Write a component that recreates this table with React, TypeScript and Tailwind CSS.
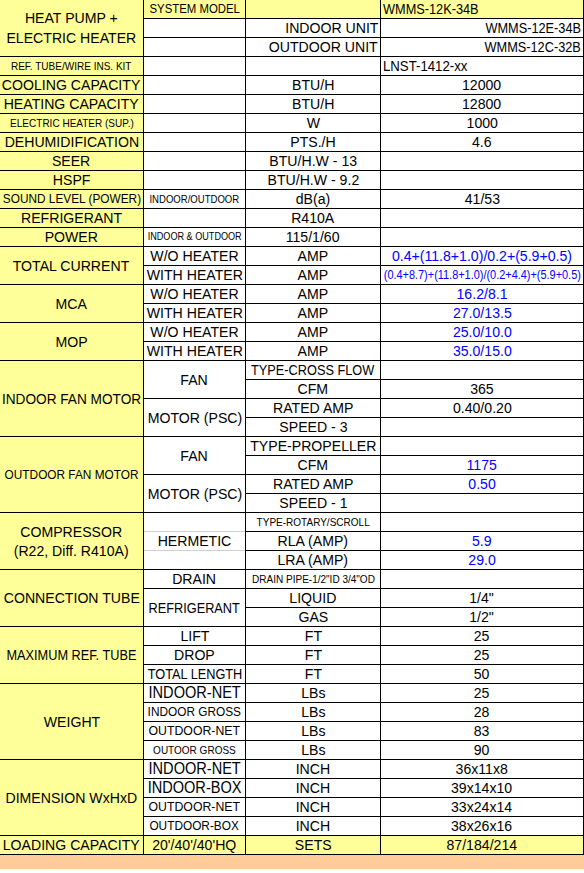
import React from 'react';

type CP = {
  bg?: 'y' | 'w';
  span?: 2 | 3 | 4;
  a?: 'c' | 'l' | 'r';
  sz?: string;
  blue?: boolean;
  children?: React.ReactNode;
};

function C({ bg = 'w', span, a = 'c', sz = 'text-[15.5px]', blue, children }: CP) {
  const spanCls = span === 2 ? 'row-span-2' : span === 3 ? 'row-span-3' : span === 4 ? 'row-span-4' : '';
  const bgCls = bg === 'y' ? 'bg-[#ffff99]' : 'bg-white';
  const alignCls = a === 'c' ? 'justify-center' : a === 'l' ? 'justify-start pl-[2px]' : 'justify-end pr-[2px]';
  const origin = a === 'c' ? 'origin-center' : a === 'l' ? 'origin-left' : 'origin-right';
  return (
    <div className={`flex items-center ${spanCls} ${bgCls} ${alignCls}`}>
      {children !== undefined && (
        <span
          className={`inline-block whitespace-nowrap scale-x-[0.91] leading-[18px] ${origin} ${sz} ${
            blue ? 'text-[#0000ff]' : 'text-black'
          }`}
        >
          {children}
        </span>
      )}
    </div>
  );
}

export default function App() {
  const Y = 'y' as const;
  return (
    <div className="w-[584px] bg-white font-['Liberation_Sans',Arial,sans-serif]">
      <div className="grid w-[584px] grid-cols-[143px_101px_134px_202px] auto-rows-[18px] gap-px border-r border-b border-black bg-black">
        {/* Row 1-3 */}
        <div className="row-span-3 flex items-center justify-center bg-[#ffff99]">
          <span className="inline-block scale-x-[0.91] text-center text-[15.5px] leading-[20px] text-black whitespace-nowrap">
            HEAT PUMP +<br />ELECTRIC HEATER
          </span>
        </div>
        <C bg={Y} sz="text-[12.5px]">SYSTEM MODEL</C>
        <C bg={Y} />
        <C bg={Y} a="l" sz="text-[14px]">WMMS-12K-34B</C>

        <C />
        <C a="r">INDOOR UNIT</C>
        <C a="r" sz="text-[14px]">WMMS-12E-34B</C>

        <C />
        <C a="r">OUTDOOR UNIT</C>
        <C a="r" sz="text-[14px]">WMMS-12C-32B</C>

        {/* Row 4 */}
        <C bg={Y} sz="text-[11px]">REF. TUBE/WIRE INS. KIT</C>
        <C />
        <C />
        <C a="l" sz="text-[14.5px]">LNST-1412-xx</C>

        <C bg={Y}>COOLING CAPACITY</C>
        <C />
        <C>BTU/H</C>
        <C>12000</C>

        <C bg={Y}>HEATING CAPACITY</C>
        <C />
        <C>BTU/H</C>
        <C>12800</C>

        <C bg={Y} sz="text-[11px]">ELECTRIC HEATER (SUP.)</C>
        <C />
        <C>W</C>
        <C>1000</C>

        <C bg={Y}>DEHUMIDIFICATION</C>
        <C />
        <C>PTS./H</C>
        <C>4.6</C>

        <C bg={Y}>SEER</C>
        <C />
        <C>BTU/H.W - 13</C>
        <C />

        <C bg={Y}>HSPF</C>
        <C />
        <C>BTU/H.W - 9.2</C>
        <C />

        <C bg={Y} sz="text-[13px]">SOUND LEVEL (POWER)</C>
        <C sz="text-[10.5px]">INDOOR/OUTDOOR</C>
        <C>dB(a)</C>
        <C>41/53</C>

        <C bg={Y}>REFRIGERANT</C>
        <C />
        <C>R410A</C>
        <C />

        <C bg={Y}>POWER</C>
        <C sz="text-[10px]">INDOOR &amp; OUTDOOR</C>
        <C>115/1/60</C>
        <C />

        {/* Total current */}
        <C bg={Y} span={2}>TOTAL CURRENT</C>
        <C>W/O HEATER</C>
        <C>AMP</C>
        <C blue>0.4+(11.8+1.0)/0.2+(5.9+0.5)</C>
        <C>WITH HEATER</C>
        <C>AMP</C>
        <C blue sz="text-[12px]">(0.4+8.7)+(11.8+1.0)/(0.2+4.4)+(5.9+0.5)</C>

        <C bg={Y} span={2}>MCA</C>
        <C>W/O HEATER</C>
        <C>AMP</C>
        <C blue>16.2/8.1</C>
        <C>WITH HEATER</C>
        <C>AMP</C>
        <C blue>27.0/13.5</C>

        <C bg={Y} span={2}>MOP</C>
        <C>W/O HEATER</C>
        <C>AMP</C>
        <C blue>25.0/10.0</C>
        <C>WITH HEATER</C>
        <C>AMP</C>
        <C blue>35.0/15.0</C>

        {/* Indoor fan motor */}
        <C bg={Y} span={4} sz="text-[15px]">INDOOR FAN MOTOR</C>
        <C span={2}>FAN</C>
        <C sz="text-[14px]">TYPE-CROSS FLOW</C>
        <C />
        <C>CFM</C>
        <C>365</C>
        <C span={2}>MOTOR (PSC)</C>
        <C>RATED AMP</C>
        <C>0.40/0.20</C>
        <C>SPEED - 3</C>
        <C />

        {/* Outdoor fan motor */}
        <C bg={Y} span={4} sz="text-[13px]">OUTDOOR FAN MOTOR</C>
        <C span={2}>FAN</C>
        <C>TYPE-PROPELLER</C>
        <C />
        <C>CFM</C>
        <C blue>1175</C>
        <C span={2}>MOTOR (PSC)</C>
        <C>RATED AMP</C>
        <C blue>0.50</C>
        <C>SPEED - 1</C>
        <C />

        {/* Compressor */}
        <div className="row-span-3 flex items-center justify-center bg-[#ffff99]">
          <span className="inline-block scale-x-[0.91] text-center text-[15.5px] leading-[19px] text-black whitespace-nowrap">
            COMPRESSOR<br />(R22, Diff. R410A)
          </span>
        </div>
        <div className="row-span-3 flex flex-col bg-white">
          <div className="h-[18px]" />
          <div className="h-px bg-[#d0d0d0]" />
          <div className="flex h-[18px] items-center justify-center">
            <span className="inline-block scale-x-[0.91] text-[15.5px] leading-[18px] text-black whitespace-nowrap">HERMETIC</span>
          </div>
          <div className="h-px bg-[#d0d0d0]" />
          <div className="h-[18px]" />
        </div>
        <C sz="text-[11px]">TYPE-ROTARY/SCROLL</C>
        <C />
        <C>RLA (AMP)</C>
        <C blue>5.9</C>
        <C>LRA (AMP)</C>
        <C blue>29.0</C>

        {/* Connection tube */}
        <C bg={Y} span={3}>CONNECTION TUBE</C>
        <C>DRAIN</C>
        <C sz="text-[11px]">DRAIN PIPE-1/2"ID 3/4"OD</C>
        <C />
        <C span={2} sz="text-[14px]">REFRIGERANT</C>
        <C>LIQUID</C>
        <C>1/4"</C>
        <C>GAS</C>
        <C>1/2"</C>

        {/* Max ref tube */}
        <C bg={Y} span={3} sz="text-[14px]">MAXIMUM REF. TUBE</C>
        <C>LIFT</C>
        <C>FT</C>
        <C>25</C>
        <C>DROP</C>
        <C>FT</C>
        <C>25</C>
        <C sz="text-[14px]">TOTAL LENGTH</C>
        <C>FT</C>
        <C>50</C>

        {/* Weight */}
        <C bg={Y} span={4}>WEIGHT</C>
        <C sz="text-[16px]">INDOOR-NET</C>
        <C>LBs</C>
        <C>25</C>
        <C sz="text-[13px]">INDOOR GROSS</C>
        <C>LBs</C>
        <C>28</C>
        <C sz="text-[13.5px]">OUTDOOR-NET</C>
        <C>LBs</C>
        <C>83</C>
        <C sz="text-[11px]">OUTOOR GROSS</C>
        <C>LBs</C>
        <C>90</C>

        {/* Dimension */}
        <C bg={Y} span={4}>DIMENSION WxHxD</C>
        <C sz="text-[16px]">INDOOR-NET</C>
        <C>INCH</C>
        <C>36x11x8</C>
        <C sz="text-[16px]">INDOOR-BOX</C>
        <C>INCH</C>
        <C>39x14x10</C>
        <C sz="text-[13.5px]">OUTDOOR-NET</C>
        <C>INCH</C>
        <C>33x24x14</C>
        <C sz="text-[13px]">OUTDOOR-BOX</C>
        <C>INCH</C>
        <C>38x26x16</C>

        {/* Loading */}
        <C bg={Y}>LOADING CAPACITY</C>
        <C bg={Y}>20'/40'/40'HQ</C>
        <C bg={Y}>SETS</C>
        <C bg={Y}>87/184/214</C>
      </div>
      <div className="h-[14px] w-[584px] bg-[#ffcc99]" />
    </div>
  );
}
